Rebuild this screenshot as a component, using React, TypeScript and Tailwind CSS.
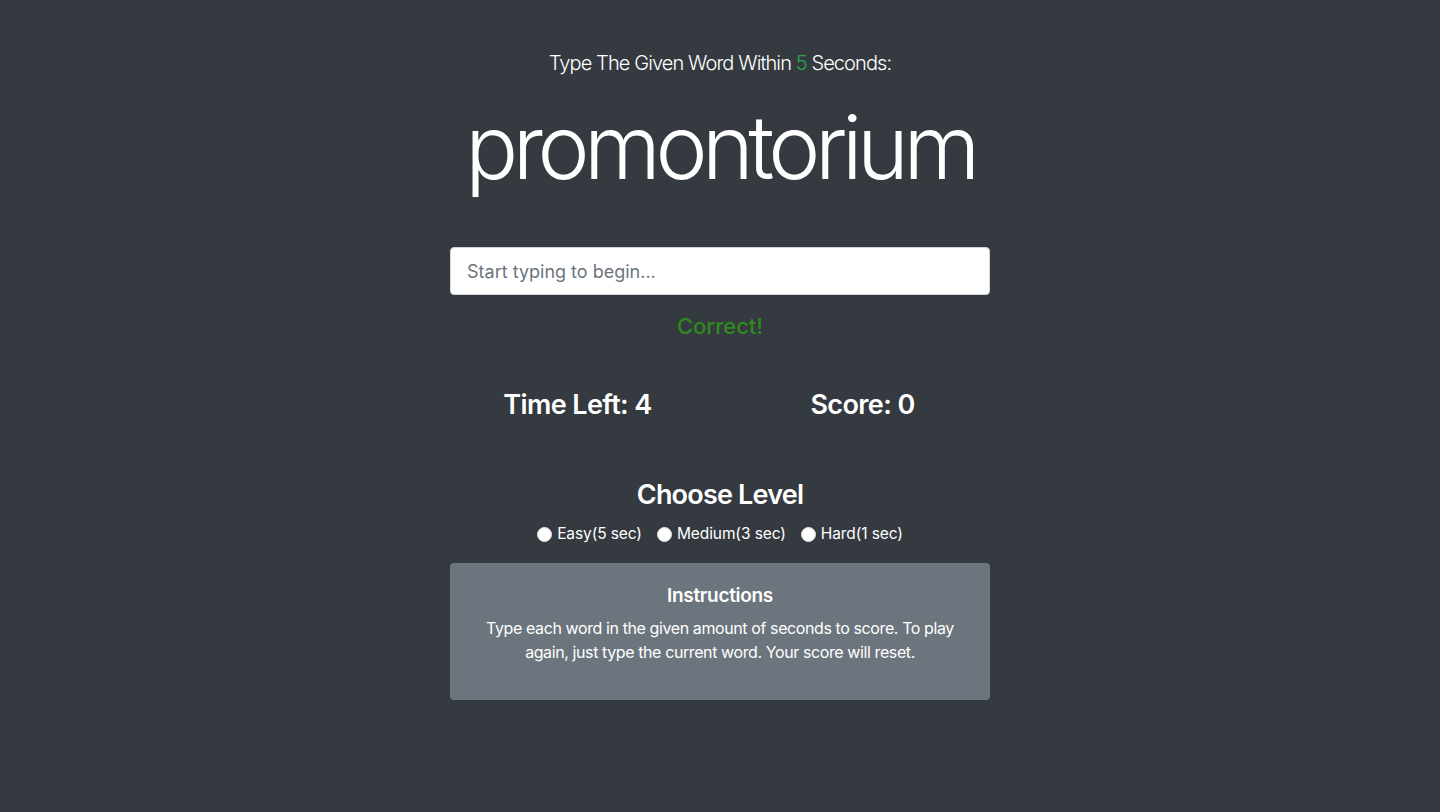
import { useState } from "react";

const LEVELS = [
  { id: "easy", label: "Easy(5 sec)" },
  { id: "medium", label: "Medium(3 sec)" },
  { id: "hard", label: "Hard(1 sec)" },
];

export default function App() {
  const [word] = useState("promontorium");
  const [input, setInput] = useState("");
  const [level, setLevel] = useState<string | null>(null);

  return (
    <div className="min-h-screen bg-[#343a40] text-white font-['Inter','Liberation_Sans',sans-serif]">
      <div className="mx-auto w-[540px] pt-12 text-center">
        {/* Header */}
        <p className="text-[20px] leading-[30px] font-light tracking-[-0.9px]">
          Type The Given Word Within <span className="text-[#28a745]">5</span> Seconds:
        </p>
        <h1 className="mt-[16px] text-[88px] leading-[106px] font-light tracking-[-5.5px]">
          {word}
        </h1>

        {/* Input */}
        <input
          type="text"
          value={input}
          onChange={(e) => setInput(e.target.value)}
          placeholder="Start typing to begin..."
          className="mt-[47px] block w-full h-[48px] rounded-[4px] border border-[#ced4da] bg-white px-4 text-[18px] text-[#495057] placeholder:text-[#6c757d] outline-none"
        />
        <h4 className="mt-[17px] text-[22px] leading-[28px] font-medium text-[#2f8a1c]">Correct!</h4>

        {/* Stats */}
        <div className="mx-[-15px] mt-[48px] flex">
          <h3 className="w-1/2 text-[27px] leading-[34px] font-semibold tracking-[-0.6px]">Time Left: 4</h3>
          <h3 className="w-1/2 text-[27px] leading-[34px] font-semibold tracking-[-0.6px]">Score: 0</h3>
        </div>

        {/* Level picker */}
        <h3 className="mt-[56px] text-[27px] leading-[34px] font-semibold tracking-[-0.8px]">Choose Level</h3>
        <div className="mt-[12px] flex justify-center items-center gap-[15px] text-[15.5px] leading-[20px] tracking-[-0.1px]">
          {LEVELS.map((l) => (
            <label key={l.id} className="flex items-center gap-[5px] cursor-pointer">
              <span
                onClick={() => setLevel(l.id)}
                className={
                  level === l.id
                    ? "h-[15px] w-[15px] rounded-full bg-white border-[4px] border-[#0d6efd]"
                    : "h-[15px] w-[15px] rounded-full bg-white border border-[#e5e5e5]"
                }
              />
              {l.label}
            </label>
          ))}
        </div>

        {/* Instructions card */}
        <div className="mt-[19px] rounded-[4px] bg-[#6c757d] px-5 pt-[21px] pb-5">
          <h5 className="text-[19px] leading-[24px] font-semibold tracking-[-0.3px]">Instructions</h5>
          <p className="mt-[8px] mb-[16px] text-[16px] leading-[24px] tracking-[-0.4px]">
            Type each word in the given amount of seconds to score. To play again, just type the current word. Your score will reset.
          </p>
        </div>
      </div>
    </div>
  );
}
